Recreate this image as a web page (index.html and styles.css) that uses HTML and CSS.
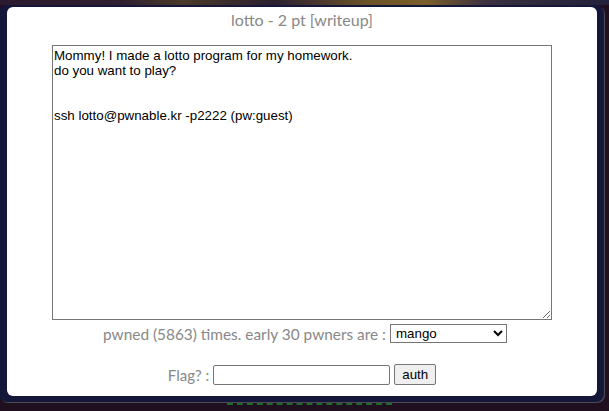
FILE: index.html
```html
<!DOCTYPE html>
<html lang="en">
<head>
  <meta charset="UTF-8" />
  <title>lotto</title>
  <link rel="stylesheet" href="styles.css">
</head>
<body>
  <div class="scene"></div>
  <div class="frame">
    <div class="box">
      <div class="title">lotto - 2 pt [writeup]</div>
      <textarea class="desc" readonly>Mommy! I made a lotto program for my homework.
do you want to play?


ssh lotto@pwnable.kr -p2222 (pw:guest)</textarea>
      <div class="row pwners">
        pwned (5863) times. early 30 pwners are :
        <select class="pick">
          <option>mango</option>
        </select>
      </div>
      <div class="row flag">
        Flag? :
        <input type="text" class="flag-input">
        <button class="btn">auth</button>
      </div>
    </div>
  </div>
  <div class="floor">
    <div class="dash"></div>
  </div>
</body>
</html>
```

FILE: styles.css
```css
* {
  box-sizing: border-box;
}

body {
  margin: 0;
  background: #1f0f1f;
  font-family: Lato, sans-serif;
  overflow: hidden;
}

.scene {
  height: 5px;
  background: linear-gradient(90deg, #2b1a2e 0%, #2e2030 20%, #4a3a28 30%, #2b1f30 45%, #6a5228 60%, #7a5e2a 70%, #3a3040 80%, #22203a 100%);
}

.frame {
  margin: 0 5px 0 -1px;
  background: #15173a;
  border-radius: 8px;
  padding: 2px 7px 6px 8px;
  box-shadow: 1px 1px 0 #4a4a55;
}

.box {
  background: white;
  border-radius: 6px;
  height: 389px;
  display: flex;
  flex-direction: column;
  align-items: center;
}

.title {
  color: #888;
  font-size: 16px;
  margin-top: 3px;
  height: 35px;
}

.desc {
  width: 500px;
  height: 275px;
  border: 1px solid #767676;
  padding: 2px 1px;
  font-family: "Liberation Sans", Arial, sans-serif;
  font-size: 13.33px;
  line-height: 15px;
  color: #000;
  resize: vertical;
  margin: 0;
}

.row {
  color: #888;
  font-size: 15px;
  display: flex;
  align-items: center;
  gap: 4px;
}

.pwners {
  margin-top: 4px;
  padding-left: 6px;
  font-size: 15.4px;
}

.pick {
  width: 117px;
  height: 19px;
  font-family: "Liberation Sans", Arial, sans-serif;
  font-size: 13.33px;
  border: 1px solid #767676;
  border-radius: 0;
  background: white;
  color: #000;
  padding: 0 1px;
}

.flag {
  margin-top: 21px;
}

.flag-input {
  width: 177px;
  height: 20px;
  border: 1px solid #767676;
  border-radius: 2px;
  margin: 0;
}

.btn {
  height: 21px;
  padding: 0 7px;
  margin: 0;
  border: 1px solid #767676;
  border-radius: 2px;
  background: #efefef;
  font-family: "Liberation Sans", Arial, sans-serif;
  font-size: 13.33px;
  color: #000;
}

.floor {
  display: flex;
  justify-content: center;
  padding-top: 1px;
}

.dash {
  width: 165px;
  margin-left: 10px;
  border-top: 2px dashed #1f6a2a;
}
```
